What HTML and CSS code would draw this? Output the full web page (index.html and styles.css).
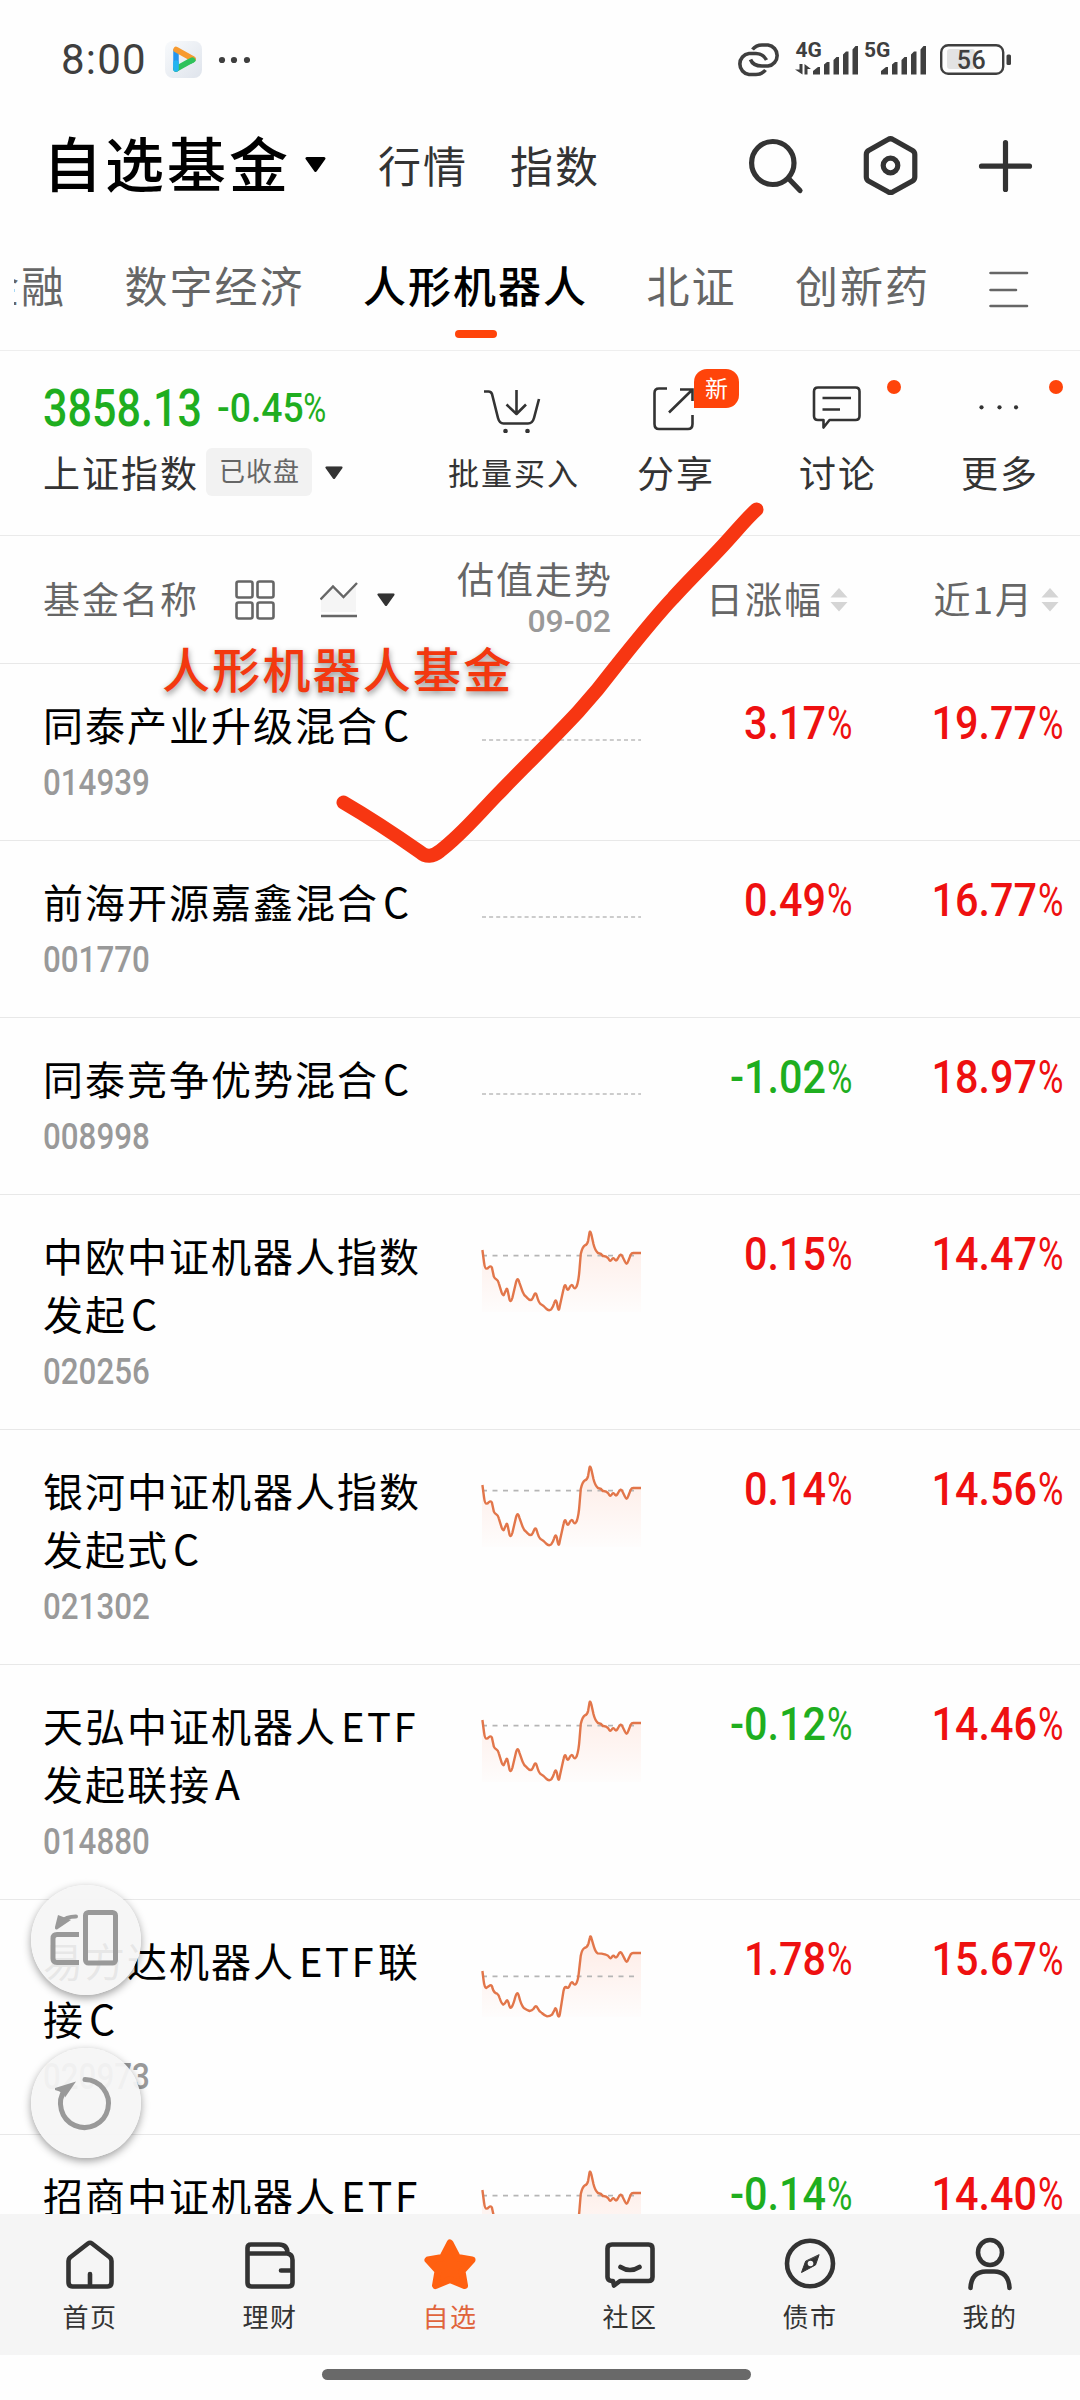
FILE: index.html
```html
<!DOCTYPE html>
<html lang="zh-CN">
<head>
<meta charset="utf-8">
<title>自选基金</title>
<link rel="stylesheet" href="styles.css">
</head>
<body>
<svg class="defs" width="0" height="0" aria-hidden="true">
  <defs>
    <linearGradient id="fade" x1="0" y1="0" x2="0" y2="1">
      <stop offset="0" stop-color="#ff6a3c" stop-opacity=".13"/>
      <stop offset="1" stop-color="#ff6a3c" stop-opacity=".01"/>
    </linearGradient>
    <symbol id="trend-a" viewBox="104 118 388 246" preserveAspectRatio="none" overflow="visible">
      <path fill="url(#fade)" d="M104 178L109 215 113 234 118 234 124 227 128 228 134 262 142 268 156 314 165 294 175 332 191 265 207 312 222 328 227 326 235 308 246 338 267 358 274 356 284 329 292 359 306 282 314 297 323 283 331 294 336 285 341 250 347 180 353 166 362 158 368 122 378 170 387 187 396 190 400 197 408 197 418 210 424 202 432 210 443 191 457 220 472 187 492 187V364H104Z"/>
      <path class="base" d="M104 195H485"/>
      <path class="curve" d="M105 178L109 215Q111 234 115 234Q118 234 120 230Q126 224 128 230L133 258Q135 264 139 266Q143 268 145 278L152 306Q156 320 159 308L163 297Q165 290 167 302L171 326Q174 338 178 322L187 275Q191 256 195 275L203 303Q206 314 213 320Q219 328 222 328Q226 328 228 322L232 311Q235 304 238 316Q242 335 247 340Q256 346 260 353Q267 362 273 356Q277 350 280 338Q284 320 287 338Q291 372 294 345L303 295Q306 276 309 288Q313 304 317 292Q323 276 327 289Q331 298 335 287Q340 270 342 235L345 190Q349 168 355 164Q361 162 363 150L366 128Q368 116 371 132L376 160Q380 180 387 187Q395 188 399 196Q407 195 412 203Q417 216 421 206Q424 198 429 208Q432 212 436 202Q443 184 447 198L453 213Q457 226 461 211L467 192Q469 187 473 187H492"/>
    </symbol>
    <symbol id="trend-b" viewBox="104 103 388 246" preserveAspectRatio="none" overflow="visible">
      <path fill="url(#fade)" d="M104 211L108 245 113 262 125 254 133 274 143 281 156 312 166 299 174 322 190 278 206 321 222 331 236 318 246 335 263 347 273 344 284 323 291 348 307 257 314 262 323 245 331 253 339 232 347 155 354 142 362 138 369 106 378 140 386 158 406 161 418 172 424 166 432 170 442 155 457 183 472 157 492 157V349H104Z"/>
      <path class="base" d="M104 227H485"/>
      <path class="curve" d="M105 211L108 240Q110 260 114 262Q119 258 124 254Q128 252 130 264Q133 277 141 279Q145 282 147 292Q151 308 156 312Q160 310 163 302Q166 294 169 307Q172 328 177 318Q181 310 185 290Q190 268 194 286Q199 312 206 322Q213 328 220 331Q226 330 230 324Q236 310 240 323Q244 334 250 337Q257 345 263 347Q270 347 275 342L281 328Q284 316 287 333Q291 358 294 340L303 270Q306 254 311 261Q315 264 318 254Q323 238 327 249Q331 256 335 246Q339 236 341 208L345 165Q348 146 354 142Q361 140 364 128L367 112Q369 100 372 117L377 138Q381 154 386 158Q396 158 406 162Q412 164 415 170Q418 176 421 169Q424 162 428 168Q432 174 436 163Q442 148 446 160L453 177Q457 190 461 176L467 161Q470 156 474 157H492"/>
    </symbol>
    <symbol id="flat" viewBox="0 0 159 82"><path d="M0 41H159" stroke="#ccc" stroke-width="2" stroke-dasharray="4 3.1"/></symbol>
    <symbol id="sort" viewBox="0 0 18 24"><path fill="#d5d5d5" d="M9 0L17.5 9.500H.5ZM9 23.500L17.500 14H.5Z"/></symbol>
    <symbol id="caret" viewBox="0 0 21 16"><path d="M2 1.500H19L10.500 13.500Z" fill="currentColor" stroke="currentColor" stroke-width="3" stroke-linejoin="round"/></symbol>
  </defs>
</svg>

<div class="screen">
  <header class="status">
    <span class="clock">8:00</span>
    <svg class="app-icon" width="38" height="38" viewBox="0 0 38 38">
      <defs>
        <linearGradient id="tile" x1="0" y1="0" x2="1" y2="1"><stop offset="0" stop-color="#f8fafc"/><stop offset="1" stop-color="#dfe4ec"/></linearGradient>
      </defs>
      <rect width="37" height="37" rx="8" fill="url(#tile)"/>
      <g fill="none" stroke-width="5.500" stroke-linecap="round" stroke-linejoin="round">
        <path d="M11 28V10" stroke="#2495ee"/>
        <path d="M11 28L28 18.500" stroke="#2fc25b"/>
        <path d="M11 28V22" stroke="#25b4f0"/>
        <path d="M11 8.500L28 18" stroke="#f79a2f"/>
        <path d="M27.500 19L25 20.300" stroke="#2fc25b"/>
      </g>
    </svg>
    <svg class="more-dots" width="32" height="8" viewBox="0 0 32 8"><g fill="#3f3f3f"><circle cx="4" cy="4" r="3.100"/><circle cx="16" cy="4" r="3.100"/><circle cx="29" cy="4" r="3.100"/></g></svg>
    <svg class="radio" width="280" height="40" viewBox="735 40 280 40">
      <g fill="none" stroke="#3f3f3f" stroke-width="3.600">
        <path d="M752.500 49.500Q756 45 762 45H768A10.600 10.600 0 0 1 768 66H762Q753 66 750.500 59.500"/>
        <path d="M765.500 70Q762 74.500 756 74.500H749A10.600 10.600 0 0 1 749 53.500H756Q763 53.500 766.500 60"/>
      </g>
      <g fill="#3f3f3f">
        <path d="M799.500 64H802.500V74.500L795 69.500H799.500ZM804.500 64L811 69H807.500V74.500H804.500Z"/>
        <path d="M813 74.500V71L818 67H820V74.500ZM824 74.500V64.500L827 62H829.500V74.500ZM833.500 74.500V60L836.500 57H839V74.500ZM843 74.500V54.500L846 51.500H848.500V74.500ZM852.500 74.500V49.500L855.500 46H858V74.500Z"/>
        <path d="M881 74.500V71L886 67H888V74.500ZM892 74.500V64.500L895 62H897.500V74.500ZM901.500 74.500V60L904.500 57H907V74.500ZM911 74.500V54.500L914 51.500H916.500V74.500ZM920.500 74.500V49.500L923.500 46H926V74.500Z"/>
        <rect x="1006.500" y="54.500" width="4.500" height="10.500" rx="1.500"/>
      </g>
      <rect x="947" y="49" width="28" height="20" rx="3" fill="#e3e3e3"/>
      <rect x="941.200" y="45.200" width="62" height="28.600" rx="7" fill="none" stroke="#3f3f3f" stroke-width="2.400"/>
      <text x="795.500" y="57" class="net">4G</text>
      <text x="864" y="57" class="net">5G</text>
      <text x="971.500" y="69" class="batt">56</text>
    </svg>
  </header>

  <div class="topbar">
    <h1>自选基金</h1>
    <svg class="title-caret" width="21" height="16"><use href="#caret"/></svg>
    <span class="top-link">行情</span>
    <span class="top-link second">指数</span>
    <svg class="top-icons" width="290" height="64" viewBox="745 133 290 64">
      <g fill="none" stroke="#333" stroke-width="5.200" stroke-linecap="round" stroke-linejoin="round">
        <ellipse cx="772.800" cy="163" rx="21.200" ry="21.500"/><path d="M789 179L800 190.500"/>
        <path d="M888 139.500Q890.500 138 893 139.500L912.500 150.500Q914.800 152 914.800 154.500V177Q914.800 179.500 912.500 181L893 191.800Q890.500 193 888 191.800L868.500 181Q866.300 179.500 866.300 177V154.500Q866.300 152 868.500 150.500Z"/>
        <circle cx="890.500" cy="165.500" r="7.300"/>
        <path d="M981.500 166.200H1029.500M1005.500 142.500V189.500"/>
      </g>
    </svg>
  </div>

  <nav class="tabs">
    <div class="tab-strip">
      <span class="cut">金融</span><span>数字经济</span><span class="on">人形机器人</span><span>北证</span><span>创新药</span>
    </div>
    <svg width="40" height="38" viewBox="0 0 40 38"><path d="M1.500 3H38M1.500 20H27M1.500 36H38" fill="none" stroke="#666" stroke-width="2.600" stroke-linecap="round"/></svg>
  </nav>

  <section class="summary">
    <div class="index">
      <div class="quote"><span class="price">3858.13</span><span class="change">-0.45<i>%</i></span></div>
      <div class="index-name"><b>上证指数</b><em>已收盘</em><svg width="18" height="14" viewBox="0 0 21 16"><use href="#caret"/></svg></div>
    </div>
    <div class="action buy">
      <svg width="60" height="48" viewBox="482 388 60 48"><g fill="none" stroke="#333" stroke-width="2.600" stroke-linejoin="round"><path d="M483 394.500H487.500Q490 394.500 491 397L497 421Q498.500 426.500 502.500 426.500H527Q531.500 426.500 533 421L538 402"/><path d="M515.500 393V416M505.500 407.500L515.500 417L525 407.500"/></g><g fill="#333"><circle cx="504.500" cy="434" r="2.300"/><circle cx="526.500" cy="434" r="2.300"/></g></svg>
      <span class="small">批量买入</span>
    </div>
    <div class="action">
      <svg width="48" height="48" viewBox="651 386 48 48"><path d="M667 389.500H659Q654.500 389.500 654.500 394V425Q654.500 430 659 430H688Q692.500 430 692.500 425V416M680 390.500H692.500V402M692 391L669 413.500" fill="none" stroke="#333" stroke-width="2.600"/></svg>
      <span>分享</span>
      <strong class="badge">新</strong>
    </div>
    <div class="action">
      <svg width="52" height="48" viewBox="811 386 52 48"><path d="M818 388.500H855.500Q859.500 388.500 859.500 392.500V417Q859.500 421 855.500 421H829.500L823.500 428.500V421H818Q814 421 814 417V392.500Q814 388.500 818 388.500ZM822.500 399H851M822.500 410.500H840" fill="none" stroke="#333" stroke-width="2.600" stroke-linejoin="round"/></svg>
      <span>讨论</span>
      <i class="dot"></i>
    </div>
    <div class="action">
      <svg width="48" height="48" viewBox="974 386 48 48"><g fill="#333"><circle cx="980.500" cy="408.300" r="2.100"/><circle cx="998.500" cy="408.300" r="2.100"/><circle cx="1015" cy="408.300" r="2.100"/></g></svg>
      <span>更多</span>
      <i class="dot"></i>
    </div>
  </section>

  <section class="columns">
    <div class="col-name">
      <span>基金名称</span>
      <svg class="grid-icon" width="40" height="40" viewBox="0 0 40 40"><g fill="none" stroke="#666" stroke-width="2.600"><rect x="1.500" y="1.500" width="16" height="16" rx="2"/><rect x="22.500" y="1.500" width="16" height="16" rx="2"/><rect x="1.500" y="22.500" width="16" height="16" rx="2"/><rect x="22.500" y="22.500" width="16" height="16" rx="2"/></g></svg>
      <svg class="line-icon" width="38" height="36" viewBox="0 0 38 36"><path d="M1 17L13 5 23.500 15 36 2V30H1Z" fill="#f5f5f5"/><path d="M.5 17.500L13 4.500 23.500 15 37 1M1 34H37" fill="none" stroke="#666" stroke-width="2.400"/></svg>
      <svg class="dark" width="18" height="14" viewBox="0 0 21 16"><use href="#caret"/></svg>
    </div>
    <div class="col-trend"><span>估值走势</span><small>09-02</small></div>
    <div class="col-sort"><span>日涨幅</span><svg width="18" height="24"><use href="#sort"/></svg></div>
    <div class="col-sort"><span>近1月</span><svg width="18" height="24"><use href="#sort"/></svg></div>
  </section>

  <main class="list">
    <article class="fund"><div><h2>同泰产业升级混合<span>C</span></h2><p>014939</p></div><svg class="trend"><use href="#flat"/></svg><span class="num up">3.17<i>%</i></span><span class="num up">19.77<i>%</i></span></article>
    <article class="fund"><div><h2>前海开源嘉鑫混合<span>C</span></h2><p>001770</p></div><svg class="trend"><use href="#flat"/></svg><span class="num up">0.49<i>%</i></span><span class="num up">16.77<i>%</i></span></article>
    <article class="fund"><div><h2>同泰竞争优势混合<span>C</span></h2><p>008998</p></div><svg class="trend"><use href="#flat"/></svg><span class="num down">-1.02<i>%</i></span><span class="num up">18.97<i>%</i></span></article>
    <article class="fund tall"><div><h2>中欧中证机器人指数<br>发起<span>C</span></h2><p>020256</p></div><svg class="trend"><use href="#trend-a"/></svg><span class="num up">0.15<i>%</i></span><span class="num up">14.47<i>%</i></span></article>
    <article class="fund tall"><div><h2>银河中证机器人指数<br>发起式<span>C</span></h2><p>021302</p></div><svg class="trend"><use href="#trend-a"/></svg><span class="num up">0.14<i>%</i></span><span class="num up">14.56<i>%</i></span></article>
    <article class="fund tall"><div><h2>天弘中证机器人<span>ETF</span><br>发起联接<span>A</span></h2><p>014880</p></div><svg class="trend"><use href="#trend-a"/></svg><span class="num down">-0.12<i>%</i></span><span class="num up">14.46<i>%</i></span></article>
    <article class="fund tall"><div><h2>易方达机器人<span>ETF</span>联<br>接<span>C</span></h2><p>020973</p></div><svg class="trend"><use href="#trend-b"/></svg><span class="num up">1.78<i>%</i></span><span class="num up">15.67<i>%</i></span></article>
    <article class="fund tall"><div><h2>招商中证机器人<span>ETF</span></h2></div><svg class="trend"><use href="#trend-a"/></svg><span class="num down">-0.14<i>%</i></span><span class="num up">14.40<i>%</i></span></article>
  </main>

  <footer class="tabbar">
    <div><svg width="60" height="60" viewBox="0 0 60 60"><path d="M28 8.500Q30 7 32 8.500L50 22.500Q51.500 24 51.500 26V47Q51.500 51.500 47.500 51.500H12.500Q8.500 51.500 8.500 47V26Q8.500 24 10 22.500ZM30 39V50"/></svg><span>首页</span></div>
    <div><svg width="60" height="60" viewBox="0 0 60 60"><path d="M7.500 18.500V13Q7.500 9.500 11 9.500H39Q47.500 9.500 47.500 18.500M7.500 18.500H47Q52.500 19 52.500 25V47.500Q52.500 51.500 48.500 51.500H11.500Q7.500 51.500 7.500 47.500ZM41 35.500H52"/></svg><span>理财</span></div>
    <div class="active"><svg width="60" height="60" viewBox="0 0 60 60"><path class="star" d="M30 8L37.500 22.500 52 25 42 36 44.500 50.500 30 44.500 15.500 50.500 18 36 8 25 22.500 22.500Z"/></svg><span>自选</span></div>
    <div><svg width="60" height="60" viewBox="0 0 60 60"><path d="M12 9.500H48.500Q52.500 9.500 52.500 13.500V42Q52.500 46 48.500 46H20L14 50.500 13 46H11.500Q7.500 45.500 7.500 42V13.500Q7.500 9.500 12 9.500ZM20.500 32Q30 38 39.500 32"/></svg><span>社区</span></div>
    <div><svg width="60" height="60" viewBox="0 0 60 60"><ellipse cx="30" cy="28.500" rx="23" ry="22.800"/><path class="needle" d="M39 20L35.500 30 21.500 37.500 25.500 26.500Z"/><circle class="hole" cx="30.500" cy="28.500" r="2.800"/></svg><span>债市</span></div>
    <div><svg width="60" height="60" viewBox="0 0 60 60"><ellipse cx="30" cy="17.500" rx="12" ry="12.500"/><path d="M10.500 53Q11.500 36.500 26 36.500H34Q48.500 36.500 49.500 53"/></svg><span>我的</span></div>
  </footer>
  <div class="gesture"></div>

  <div class="float rotate"><svg width="110" height="110" viewBox="0 0 110 110"><g fill="none" stroke="#999" stroke-width="5"><rect x="54.500" y="27.500" width="30" height="50.500" rx="3"/><path d="M48 49.500H26Q22 49.500 22 53.500V73.500Q22 77.500 26 77.500H48"/><path d="M45 31.500Q35 31.500 30 37" stroke-width="4" stroke-linecap="round"/></g><path d="M27 30L40 35 26 44.500Q23.500 45 24 42Z" fill="#999"/></svg></div>
  <div class="float reset"><svg width="110" height="110" viewBox="0 0 110 110"><path d="M54 31.500A24 24 0 1 1 34 41.500" fill="none" stroke="#999" stroke-width="5" stroke-linecap="round"/><path d="M24 40L45 33.500 34 49.500Q33 44 24 42Z" fill="#999"/></svg></div>

  <div class="note">人形机器人基金</div>
  <svg class="tick" width="440" height="380" viewBox="330 495 440 380"><path d="M343.500 802.500C365 815 390 831 420 852Q429 860 440 851C460 836 475 818 496 796C520 771 550 742 578 712Q598 690 616 666C640 636 655 617 673 598C690 579 712 558 728 540C738 529 748 517 756.500 509.500" fill="none" stroke="#f73612" stroke-width="14" stroke-linecap="round" stroke-linejoin="round"/></svg>
</div>
</body>
</html>
```

FILE: styles.css
```css
* { box-sizing: border-box; }
body { margin: 0; background: #fefefe; color: #000; font-family: "Noto Sans CJK SC", sans-serif; }
h1, h2, p { margin: 0; font-weight: 400; }
i, em { font-style: normal; }
svg { display: block; flex: none; }
.defs { position: absolute; }
.screen { position: relative; width: 1080px; height: 2400px; overflow: hidden; display: flex; flex-direction: column; }

/* status bar */
.status { height: 116px; display: flex; align-items: center; padding: 4px 0 0 61px; }
.clock { width: 104px; font: 400 42px/50px Roboto, sans-serif; color: #3f3f3f; letter-spacing: 1.2px; }
.more-dots { margin-left: 15px; }
.radio { margin-left: 485px; overflow: visible; }
.net { font: 700 21px Roboto, sans-serif; fill: #3f3f3f; }
.batt { font: 500 25px Roboto, sans-serif; fill: #3f3f3f; text-anchor: middle; letter-spacing: .5px; }

/* title row */
.topbar { height: 98px; display: flex; align-items: center; padding-left: 43px; }
h1 { width: 262px; font-size: 59px; line-height: 90px; font-weight: 500; letter-spacing: 3px; margin-top: -6px; white-space: nowrap; }
.top-link { width: 88px; margin-left: 52px; font-size: 43px; line-height: 64px; letter-spacing: 2px; color: #333; margin-top: -2px; white-space: nowrap; }
.top-link.second { margin-left: 44px; }
.top-icons { margin-left: 147px; }

/* category tabs */
.tabs { height: 136px; display: flex; align-items: flex-start; justify-content: space-between; padding: 38px 51px 0 14px; }
.tab-strip { width: 925px; height: 90px; overflow: hidden; display: flex; font-size: 43px; line-height: 64px; letter-spacing: 2px; color: #666; white-space: nowrap; }
.tab-strip span { margin-right: 58.5px; flex: none; }
.tab-strip .cut { margin-left: -38px; }
.tab-strip .on { color: #000; font-weight: 500; }
.tab-strip .on::after { content: ""; display: block; width: 42px; height: 8px; margin: 14px auto 0; border-radius: 4px; background: #ff440a; }
.tabs svg { margin-top: 18px; }

/* index summary and actions */
.summary { height: 185px; border-top: 1px solid #eee; display: flex; padding-left: 43px; }
.index { width: 389px; padding-top: 26px; }
.quote { height: 62px; display: flex; align-items: center; color: #1fae1f; font-family: Roboto, sans-serif; font-weight: 500; white-space: nowrap; }
.price { width: 174px; font-size: 51px; transform: scaleX(.845); transform-origin: left; }
.change { font-size: 41px; transform: scaleX(.91); transform-origin: left; }
.index-name { display: flex; align-items: center; height: 60px; margin-top: 4px; color: #333; }
.index-name b { width: 163px; font-weight: 400; font-size: 37px; letter-spacing: 2px; line-height: 56px; margin-top: -3px; white-space: nowrap; }
.index-name em { width: 106px; height: 48px; margin-right: 13px; padding-left: 13px; border-radius: 6px; background: #f2f2f2; color: #666; font-size: 26px; line-height: 44px; letter-spacing: 1px; margin-top: -2px; }
.action { position: relative; width: 162px; padding-top: 34px; display: flex; flex-direction: column; align-items: center; color: #333; font-size: 37px; line-height: 56px; letter-spacing: 2px; white-space: nowrap; }
.action > span { margin-top: 11px; padding-left: 2px; }
.action .small { font-size: 31px; }
.badge { position: absolute; left: 100px; top: 18px; width: 45px; height: 39px; border-radius: 13px 13px 13px 0; background: #ff440a; color: #fff; font-size: 23px; line-height: 36px; font-weight: 400; letter-spacing: 0; text-align: center; }
.dot { position: absolute; left: 131px; top: 29px; width: 14px; height: 14px; border-radius: 50%; background: #ff440a; }

/* column headings */
.columns { height: 128px; border-top: 1px solid #eaeaea; display: flex; align-items: center; color: #666; font-size: 37px; letter-spacing: 2px; line-height: 56px; white-space: nowrap; padding-left: 43px; }
.col-name { display: flex; align-items: center; width: 380px; }
.col-name span { width: 192px; margin-top: -4px; }
.line-icon { margin: 0 19px 0 45px; }
.dark { color: #333; }
.col-trend { width: 190px; display: flex; flex-direction: column; align-items: flex-end; margin-top: -5px; }
.col-trend span { line-height: 46px; }
.col-trend small { font: 500 32px/38px Roboto, sans-serif; color: #999; letter-spacing: 0; margin-right: 2px; margin-top: 1px; }
.col-sort { display: flex; align-items: center; justify-content: flex-end; gap: 7px; width: 235px; }
.col-sort + .col-sort { width: 211px; }
.col-sort span { margin-top: -4px; }

/* fund list */
.list { height: 1551px; overflow: hidden; }
.fund { height: 177px; border-top: 1px solid #e8e8e8; display: grid; grid-template-columns: 439px 159px 211px 211px; padding-left: 43px; }
.fund.tall { height: 235px; }
.fund h2 { font-size: 40px; line-height: 58px; letter-spacing: 2px; padding-top: 31px; white-space: nowrap; }
.fund h2 span { padding: 0 2px 0 4px; letter-spacing: 2.500px; }
.fund h2 span:last-child { font-size: 41px; line-height: 1; }
.fund p { font: 500 36px/42px Roboto, sans-serif; color: #999; transform: scaleX(.87); transform-origin: left; margin-top: 9px; }
.trend { width: 159px; height: 82px; margin-top: 35px; overflow: visible; }
.curve { fill: none; stroke: #e2764a; stroke-width: 2.4px; stroke-linejoin: round; vector-effect: non-scaling-stroke; }
.base { fill: none; stroke: #b5b5b5; stroke-width: 1.8px; stroke-dasharray: 5 5.5; vector-effect: non-scaling-stroke; }
.num { font: 500 47px/56px Roboto, sans-serif; text-align: right; padding-top: 31px; transform: scaleX(.88); transform-origin: right; }
.num i, .change i { display: inline-block; font-weight: 400; transform: scaleX(.84); transform-origin: right; margin-left: -5px; }
.up { color: #ee1010; }
.down { color: #1fae1f; }

/* bottom navigation */
.tabbar { height: 141px; flex: none; background: #f5f5f5; display: grid; grid-template-columns: repeat(6, 180px); }
.tabbar div { display: flex; flex-direction: column; align-items: center; padding-top: 21px; color: #333; font-size: 26px; line-height: 40px; letter-spacing: 1.500px; }
.tabbar span { margin-top: 1px; }
.tabbar svg { height: 60px; fill: none; stroke: #333; stroke-width: 4.600px; stroke-linecap: round; stroke-linejoin: round; }
.tabbar .active { color: #e0643c; }
.tabbar .star { fill: #ff6010; stroke: #ff6010; stroke-width: 7px; }
.tabbar .needle { fill: #333; stroke-width: 1px; }
.tabbar .hole { fill: #f5f5f5; stroke: none; }
.gesture { width: 429px; height: 11px; margin: 14px 0 0 322px; border-radius: 6px; background: #696969; }

/* overlays */
.float { position: absolute; left: 31px; width: 110px; height: 110px; border-radius: 50%; background: rgba(245, 245, 245, .94); box-shadow: 0 3px 9px rgba(0, 0, 0, .38); }
.rotate { top: 1885px; }
.reset { top: 2048px; }
.note { position: absolute; left: 162px; top: 633px; font-size: 48px; line-height: 68px; font-weight: 500; letter-spacing: 2.200px; color: #f3380f; text-shadow: 0 3px 6px rgba(0, 0, 0, .45); white-space: nowrap; }
.tick { position: absolute; left: 330px; top: 495px; }
```
